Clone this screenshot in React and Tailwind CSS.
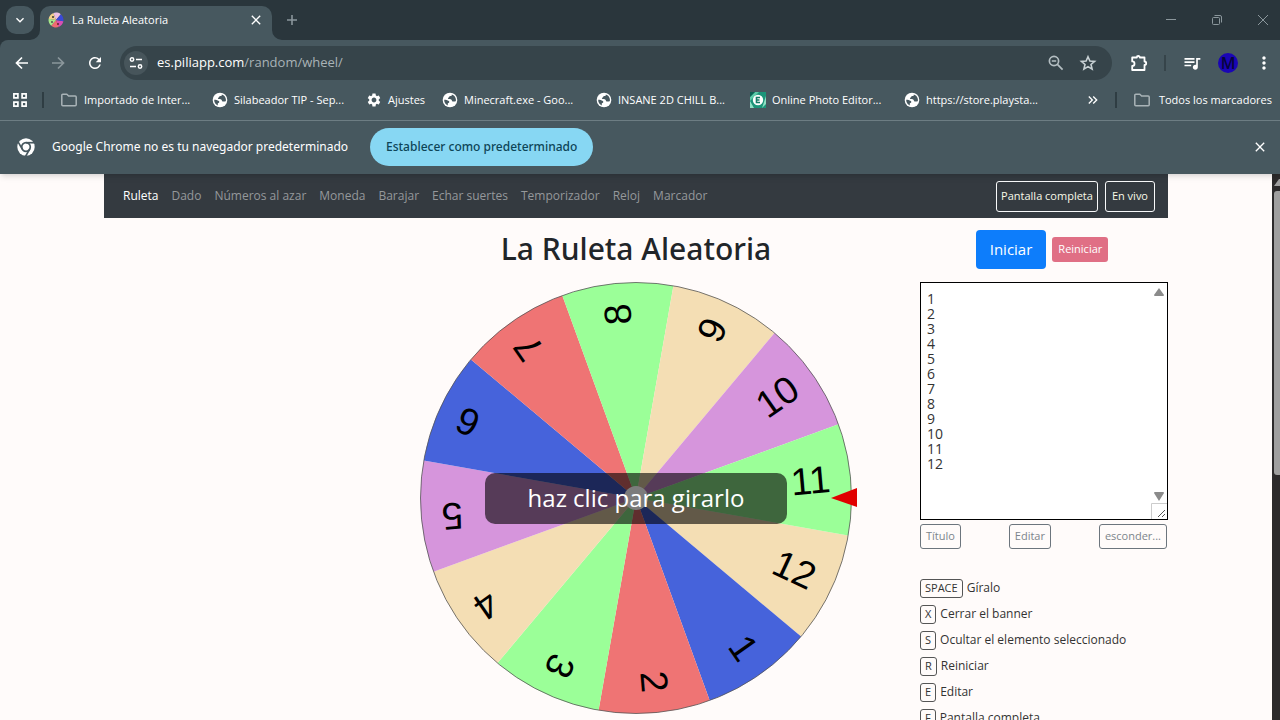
import React from 'react'
import {
  MdClose,
  MdKeyboardArrowDown,
  MdKeyboardDoubleArrowRight,
  MdMoreVert,
  MdQueueMusic,
  MdRefresh,
  MdSettings,
} from 'react-icons/md'

const slices = [
  { label: '12', angle: 25, color: '#f4deb4' },
  { label: '1', angle: 55, color: '#4663db' },
  { label: '2', angle: 85, color: '#ef7474' },
  { label: '3', angle: 115, color: '#9bff98' },
  { label: '4', angle: 145, color: '#f4deb4' },
  { label: '5', angle: 175, color: '#d695dc' },
  { label: '6', angle: 205, color: '#4663db' },
  { label: '7', angle: 235, color: '#ef7474' },
  { label: '8', angle: 265, color: '#9bff98' },
  { label: '9', angle: 295, color: '#f4deb4' },
  { label: '10', angle: 325, color: '#d695dc' },
  { label: '11', angle: 355, color: '#9bff98' },
]

const bookmarks = [
  { icon: 'folder', text: 'Importado de Inter...', width: 'w-[152px]' },
  { icon: 'globe', text: 'Silabeador TIP - Sep...', width: 'w-[154px]' },
  { icon: 'gear', text: 'Ajustes', width: 'w-[76px]' },
  { icon: 'globe', text: 'Minecraft.exe - Goo...', width: 'w-[154px]' },
  { icon: 'globe', text: 'INSANE 2D CHILL B...', width: 'w-[154px]' },
  { icon: 'photo', text: 'Online Photo Editor...', width: 'w-[154px]' },
  { icon: 'globe', text: 'https://store.playsta...', width: 'w-[154px]' },
]

const navLinks = ['Ruleta', 'Dado', 'Números al azar', 'Moneda', 'Barajar', 'Echar suertes', 'Temporizador', 'Reloj', 'Marcador']

const shortcuts = [
  ['SPACE', 'Gíralo'],
  ['X', 'Cerrar el banner'],
  ['S', 'Ocultar el elemento seleccionado'],
  ['R', 'Reiniciar'],
  ['E', 'Editar'],
  ['F', 'Pantalla completa'],
]

function slicePath(angle, r) {
  const a = ((angle - 15) * Math.PI) / 180
  const b = ((angle + 15) * Math.PI) / 180
  return `M0 0L${r * Math.cos(a)} ${r * Math.sin(a)}A${r} ${r} 0 0 1 ${r * Math.cos(b)} ${r * Math.sin(b)}Z`
}

function ArrowIcon({ flip }) {
  return (
    <svg viewBox="0 0 16 16" className={flip ? 'size-4 rotate-180' : 'size-4'} fill="none" stroke="currentColor" strokeWidth="1.700">
      <path d="M14 8H3M8 2.500L2.500 8L8 13.500" />
    </svg>
  )
}

function ZoomOutIcon() {
  return (
    <svg viewBox="0 0 18 18" className="size-[18px]" fill="none" stroke="currentColor" strokeWidth="1.700">
      <circle cx="7" cy="7" r="4.600" />
      <path d="M10.400 10.400L15.600 15.600M4.800 7h4.400" />
    </svg>
  )
}

function StarIcon() {
  return (
    <svg viewBox="0 0 18 18" className="size-[18px]" fill="none" stroke="currentColor" strokeWidth="1.600">
      <path d="M9 2.700l1.900 4.300 4.700.4-3.600 3.100 1.100 4.600L9 12.600l-4.100 2.500L6 10.500 2.400 7.400l4.700-.4z" />
    </svg>
  )
}

function GlobeIcon() {
  return (
    <svg viewBox="0 0 16 16" className="size-4 shrink-0">
      <circle cx="8" cy="8" r="7.3" fill="#fff" />
      <path d="M9.800 2.400c.3 1.100-.5 1.500-1.500 1.700-1.300.2-1 1.300-1.900 1.700-.7.400-.6 1.100.2 1.100 1.500 0 3.100.1 3.300 1.700.1 1 .9 1.100 1.900.9.700-.1 1.300-.4 2-.3.700-2.800-.9-5.800-4-6.800z" fill="#47585f" />
      <path d="M2.200 7.800c1.600.1 3.300.4 4.600 1.300.9.700.5 1.700-.4 2-.8.400-.7 1.100-.5 2.300-2.300-.8-3.900-3-3.700-5.600z" fill="#47585f" />
    </svg>
  )
}

function ChromeIcon() {
  return (
    <svg viewBox="-9 -9 18 18" className="size-[18px]">
      <circle r="8.700" fill="#fff" />
      <g fill="none" stroke="#47585f" strokeWidth="1.700">
        <circle r="4.300" />
        <path d="M0-4.300H9" />
        <path d="M0-4.300H9" transform="rotate(120)" />
        <path d="M0-4.300H9" transform="rotate(240)" />
      </g>
    </svg>
  )
}

function FolderIcon() {
  return (
    <svg viewBox="0 0 18 16" className="h-4 w-[18px] shrink-0" fill="none" stroke="#a9b3b7" strokeWidth="1.500" strokeLinejoin="round">
      <path d="M1.800 3.200a1 1 0 0 1 1-1h4l1.800 1.800h6.600a1 1 0 0 1 1 1v7.800a1 1 0 0 1-1 1H2.800a1 1 0 0 1-1-1z" />
    </svg>
  )
}

function PhotoIcon() {
  return (
    <svg viewBox="0 0 16 16" className="size-4 shrink-0">
      <path d="M0 0h16v16H0z" fill="#1c9479" />
      <path d="M0 5l5-5h4L0 9z" fill="#5cc9a7" />
      <path d="M0 9l4 7H0zM16 4v8l-4 4z" fill="#8fe0c4" />
      <path d="M0 0h5L0 5z" fill="#0c5f52" />
      <circle cx="8" cy="8" r="5.200" fill="#fff" />
      <path d="M10 5.500H6.500v5H10M6.500 8H9.500" stroke="#167a66" strokeWidth="1.600" fill="none" />
    </svg>
  )
}

function BookmarkIcon({ icon }) {
  if (icon === 'folder') return <FolderIcon />
  if (icon === 'gear') return <MdSettings className="size-4 shrink-0" />
  if (icon === 'photo') return <PhotoIcon />
  return <GlobeIcon />
}

function TabStrip() {
  return (
    <div className="flex h-10 bg-[#2a363c] pl-1.5">
      <button aria-label="Buscar pestañas" className="mt-1.5 flex size-7 items-center justify-center rounded-[10px] bg-[#47585f]">
        <MdKeyboardArrowDown className="size-4" />
      </button>
      <div className="relative ml-1.5 mt-1.5 flex w-[232px] items-center rounded-t-[10px] bg-[#47585f] px-2 pb-1.5">
        <svg viewBox="0 0 10 10" className="absolute -left-2.5 bottom-0 size-2.5 fill-[#47585f]">
          <path d="M10 0v10H0A10 10 0 0 0 10 0z" />
        </svg>
        <svg viewBox="0 0 10 10" className="absolute -right-2.5 bottom-0 size-2.5 fill-[#47585f]">
          <path d="M0 0v10h10A10 10 0 0 1 0 0z" />
        </svg>
        <svg viewBox="-8 -8 16 16" className="size-4">
          {slices.filter((s, i) => i % 2 === 0).map((s, i) => (
            <path key={s.label} d={slicePath(s.angle, 7.5) + slicePath(s.angle + 30, 7.5)} fill={['#d84fb4', '#ee6a72', '#a6e88a', '#f3d08c', '#ecbfe2', '#3a49d8'][i]} />
          ))}
          <circle cx="-3" cy="-3" r="1" fill="#333" />
          <circle cx="-4" cy="2" r="1" fill="#555" />
          <circle cx="2" cy="4" r="1" fill="#622" />
        </svg>
        <span className="ml-2 pt-px text-[11px]">La Ruleta Aleatoria</span>
        <button aria-label="Cerrar pestaña" className="ml-auto">
          <MdClose className="size-4" />
        </button>
      </div>
      <button aria-label="Nueva pestaña" className="ml-3 text-[#8b979c]">
        <svg viewBox="0 0 16 16" className="size-4">
          <path d="M8 3v10M3 8h10" stroke="currentColor" strokeWidth="1.600" />
        </svg>
      </button>
      <div className="ml-auto flex items-center gap-[34px] pr-[11px] text-[#8b979c]">
        <button aria-label="Minimizar">
          <svg viewBox="0 0 12 12" className="size-3"><path d="M1 5.500h10" stroke="currentColor" /></svg>
        </button>
        <button aria-label="Restaurar">
          <svg viewBox="0 0 12 12" className="size-3" fill="none" stroke="currentColor">
            <rect x="1.500" y="3.500" width="7" height="7" rx="1" />
            <path d="M3.500 1.500h5.500a1.500 1.500 0 0 1 1.500 1.500v5.500" />
          </svg>
        </button>
        <button aria-label="Cerrar">
          <svg viewBox="0 0 12 12" className="size-3"><path d="M1 1l10 10M11 1L1 11" stroke="currentColor" /></svg>
        </button>
      </div>
    </div>
  )
}

function Toolbar() {
  return (
    <div className="flex h-[46px] items-center pr-1.5 pl-3.5">
      <button aria-label="Atrás"><ArrowIcon /></button>
      <button aria-label="Adelante" className="ml-5 text-[#8b979c]"><ArrowIcon flip /></button>
      <button aria-label="Recargar" className="ml-5"><MdRefresh className="size-[18px]" /></button>
      <div className="ml-4 flex h-[34px] min-w-0 flex-1 items-center rounded-full bg-[#36444a] pr-[15px] pl-1">
        <button aria-label="Información del sitio" className="flex size-6 items-center justify-center rounded-full bg-[#47555b]">
          <svg viewBox="0 0 16 16" className="size-4" fill="none" stroke="currentColor" strokeWidth="1.500">
            <circle cx="4" cy="4.500" r="1.700" />
            <path d="M8 4.500h6M2 11.500h6" />
            <circle cx="12" cy="11.500" r="1.700" />
          </svg>
        </button>
        <a href="#" className="ml-[9px] text-[13px]">
          es.piliapp.com<span className="text-[#a9b3b7]">/random/wheel/</span>
        </a>
        <button aria-label="Zoom" className="ml-auto text-[#b4bec2]"><ZoomOutIcon /></button>
        <button aria-label="Añadir a marcadores" className="ml-3.5 text-[#c8d1d4]"><StarIcon /></button>
      </div>
      <button aria-label="Extensiones" className="ml-[18px]">
        <svg viewBox="0 0 18 18" className="size-[18px]" fill="none" stroke="currentColor" strokeWidth="1.800">
          <path d="M2.200 3.500H6.800a1.500 1.500 0 0 1 3 0H14.500v4a1.700 1.700 0 0 1 0 3.400v5.100H2.200v-4a2.300 2.300 0 0 0 0-4.600z" strokeLinejoin="round" />
        </svg>
      </button>
      <div className="ml-4 h-4 w-0.5 bg-[#36444a]" />
      <button aria-label="Controles multimedia" className="ml-4"><MdQueueMusic className="size-5" /></button>
      <button aria-label="Perfil" className="ml-4 flex size-5 items-center justify-center rounded-full bg-[#1a05b5] text-base font-semibold text-[#06043d]">M</button>
      <button aria-label="Menú" className="ml-4"><MdMoreVert className="size-5" /></button>
    </div>
  )
}

function BookmarksBar() {
  return (
    <div className="flex h-[34px] items-center pr-2 pb-1.5 pl-3 text-[11px] whitespace-nowrap">
      <button aria-label="Aplicaciones">
        <svg viewBox="0 0 16 16" className="size-4" fill="none" stroke="currentColor" strokeWidth="1.700">
          <path d="M1.900 1.900h4v4h-4zM10.100 1.900h4v4h-4zM1.900 10.100h4v4h-4zM10.100 10.100h4v4h-4z" />
        </svg>
      </button>
      <div className="ml-3.5 h-4 w-0.5 bg-[#2f3d43]" />
      <div className="ml-4 flex min-w-0 flex-1 overflow-hidden">
        {bookmarks.map((b) => (
          <a key={b.text} href="#" className={`flex shrink-0 items-center gap-1.5 ${b.width}`}>
            <BookmarkIcon icon={b.icon} />
            {b.text}
          </a>
        ))}
      </div>
      <button aria-label="Más marcadores"><MdKeyboardDoubleArrowRight className="size-4" /></button>
      <div className="ml-3.5 h-4 w-0.5 bg-[#2f3d43]" />
      <a href="#" className="ml-4 flex items-center gap-2">
        <FolderIcon />
        Todos los marcadores
      </a>
    </div>
  )
}

function InfoBar() {
  return (
    <div className="flex h-[54px] items-center border-t border-[#6d7d83] pr-3 pb-0.5 pl-[17px] font-['Noto_Sans','Open_Sans',sans-serif] text-xs">
      <ChromeIcon />
      <span className="ml-[17px] w-[302px] whitespace-nowrap">Google Chrome no es tu navegador predeterminado</span>
      <button className="ml-4 h-[38px] rounded-full bg-[#87d7f3] px-4 font-medium text-[#0d4557]">Establecer como predeterminado</button>
      <button aria-label="Cerrar aviso" className="ml-auto"><MdClose className="size-4" /></button>
    </div>
  )
}

function SiteNav() {
  return (
    <nav className="flex h-11 items-center bg-[#343a40] pr-[13px] pl-[19px] text-xs text-[#95989b]">
      <div className="flex gap-[13px]">
        {navLinks.map((name) => (
          <a key={name} href="#" className={name === 'Ruleta' ? 'text-white' : undefined}>{name}</a>
        ))}
      </div>
      <div className="ml-auto flex gap-[7px] text-[11px] text-[#f8f9e8]">
        <button className="h-[31px] rounded-[3px] border border-[#f8f9fa] px-1">Pantalla completa</button>
        <button className="h-[31px] rounded-[3px] border border-[#f8f9fa] px-1.5">En vivo</button>
      </div>
    </nav>
  )
}

function Wheel() {
  return (
    <div className="relative flex w-[432px] items-center justify-center">
      <svg viewBox="-216 -216 432 432" className="w-full overflow-visible">
        {slices.map((s) => (
          <path key={s.label} d={slicePath(s.angle, 215.5)} fill={s.color} />
        ))}
        <circle r="215.500" fill="none" stroke="#555" strokeWidth="0.800" />
        {slices.map((s) => (
          <text key={s.label} x="195" y="11" textAnchor="end" fontSize="38" transform={`rotate(${s.angle})`} className="font-['Liberation_Sans',sans-serif]">
            {s.label}
          </text>
        ))}
        <circle r="12" fill="#fff" />
        <path d="M195 0l26-10v19z" fill="#e00000" />
      </svg>
      <button className="absolute h-[51px] w-[302px] rounded-[10px] bg-black/60 text-2xl text-white">haz clic para girarlo</button>
      <span className="pointer-events-none absolute size-6 rounded-full bg-white/15" />
    </div>
  )
}

function Controls() {
  const small = 'h-[25px] rounded-[3px] border border-[#6c757d] px-[5px]'
  return (
    <aside className="w-[248px] shrink-0 pt-3">
      <div className="flex items-center justify-center gap-1.5 pr-1">
        <button className="h-[39px] rounded bg-[#0d7dfb] px-3.5 text-[15px] text-white">Iniciar</button>
        <button className="h-[25px] rounded-[3px] bg-[#e06f85] px-1.5 text-[11px] text-white">Reiniciar</button>
      </div>
      <div className="relative mt-[13px]">
        <textarea
          aria-label="Elementos"
          defaultValue={slices.map((s, i) => i + 1).join('\n')}
          className="block h-[238px] w-full resize-none overflow-hidden border border-black bg-white py-2 pr-4 pl-1.5 text-sm leading-[15px] text-[#333]"
        />
        <div className="absolute inset-y-px right-px flex w-4 flex-col items-center justify-between">
          <svg viewBox="0 0 16 16" className="size-4"><path d="M3 12l5-7 5 7q0 1-1 1H4q-1 0-1-1z" fill="#8b8b8b" /></svg>
          <div>
            <svg viewBox="0 0 16 16" className="size-4"><path d="M3 6l5 8 5-8q0-1-1-1H4q-1 0-1 1z" fill="#8b8b8b" /></svg>
            <svg viewBox="0 0 16 16" className="size-4" fill="none"><path d="M.5 16V.5H16" stroke="#ccc" /><path d="M7 14l7-7M11 14l3-3" stroke="#555" /></svg>
          </div>
        </div>
      </div>
      <div className="mt-1 flex justify-between pr-px text-[11px] text-[#7d858c]">
        <button className={small}>Título</button>
        <button className={small}>Editar</button>
        <button className={small}>esconder...</button>
      </div>
      <ul className="mt-[26px] text-xs text-[#333]">
        {shortcuts.map(([key, text]) => (
          <li key={key} className="flex h-[26px] items-center gap-1">
            <kbd className="flex h-[19px] items-center rounded-[3px] border border-[#555] px-1 font-[inherit] text-[11px]">{key}</kbd>
            {text}
          </li>
        ))}
      </ul>
    </aside>
  )
}

export default function App() {
  return (
    <div className="flex h-screen flex-col overflow-hidden bg-[#fffbfa] font-['Open_Sans','Noto_Sans',sans-serif]">
      <header className="relative z-10 bg-[#2a363c] text-white shadow-md">
        <TabStrip />
        <div className="rounded-tl-lg bg-[#47585f]">
          <Toolbar />
          <BookmarksBar />
          <InfoBar />
        </div>
      </header>
      <div className="flex min-h-0 flex-1">
        <main className="min-w-0 flex-1 overflow-hidden">
          <div className="mx-auto max-w-[1064px]">
            <SiteNav />
            <div className="flex items-start">
              <div className="flex flex-1 flex-col items-center pl-[248px]">
                <h1 className="flex h-16 items-center pb-0.5 font-['Noto_Sans','Open_Sans',sans-serif] text-3xl font-medium text-[#212529]">La Ruleta Aleatoria</h1>
                <Wheel />
              </div>
              <Controls />
            </div>
          </div>
        </main>
        <div className="flex w-2 flex-col items-end bg-[#2c2a2b] pt-1">
          <svg viewBox="0 0 6 8" className="h-2 w-1.5"><path d="M0 8l5-7h1v7z" fill="#9f9f9f" /></svg>
          <div className="mt-[5px] h-[284px] w-1.5 rounded-l-[3px] bg-[#9f9f9f]" />
        </div>
      </div>
    </div>
  )
}
